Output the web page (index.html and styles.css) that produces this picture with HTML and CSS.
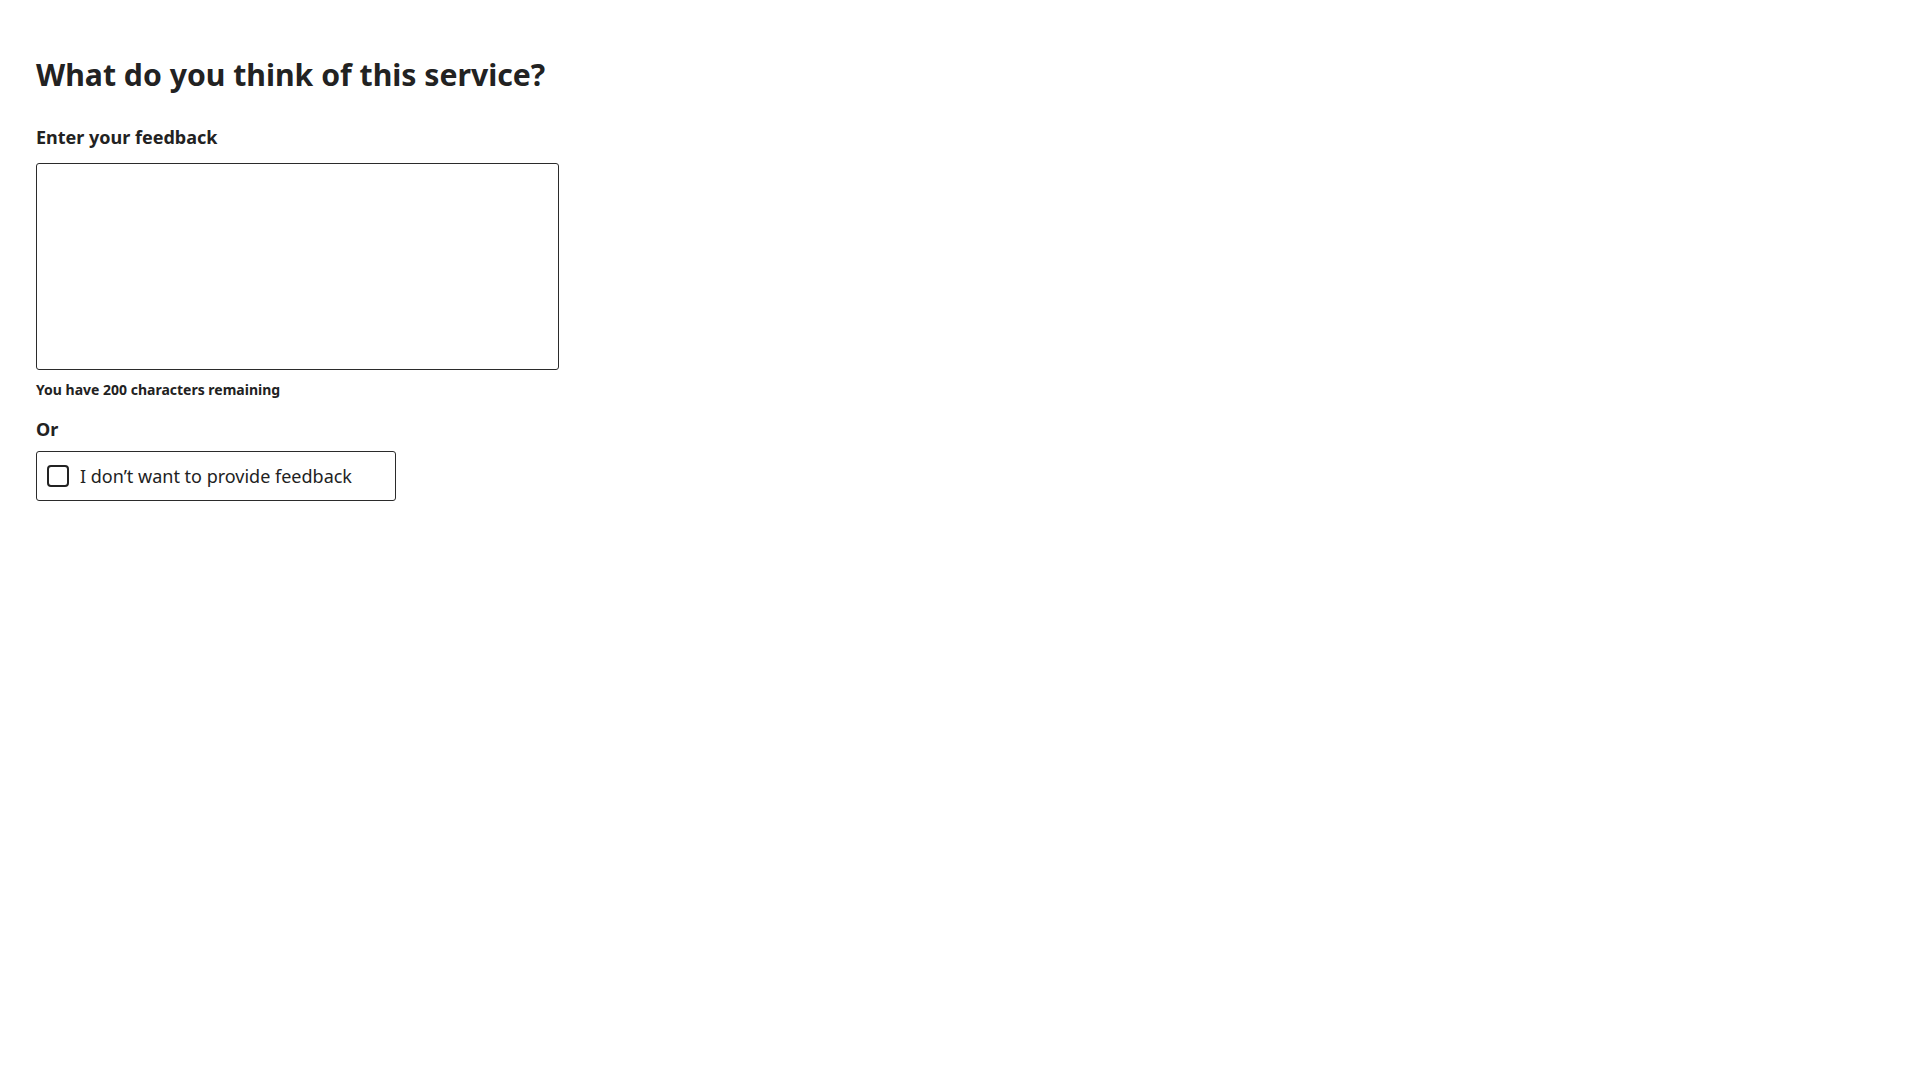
FILE: index.html
```html
<!DOCTYPE html>
<html lang="en">
<head>
<meta charset="utf-8">
<title>Feedback</title>
<link rel="stylesheet" href="styles.css">
</head>
<body>
<main class="page">
  <h1 class="title">What do you think of this service?</h1>
  <form class="form">
    <label class="label" for="feedback">Enter your feedback</label>
    <textarea class="textarea" id="feedback" name="feedback"></textarea>
    <p class="hint">You have 200 characters remaining</p>
    <p class="or">Or</p>
    <label class="opt-out">
      <input class="opt-out-input" type="checkbox" name="no-feedback">
      <span class="box" aria-hidden="true"></span>
      <span class="opt-out-text">I don’t want to provide feedback</span>
    </label>
  </form>
</main>
</body>
</html>
```

FILE: styles.css
```css
html, body {
  margin: 0;
  padding: 0;
  background: #ffffff;
}

body {
  font-family: "Noto Sans", "Open Sans", sans-serif;
  color: #222222;
}

.page {
  padding: 57px 36px 0 36px;
}

.title {
  margin: 0;
  font-size: 30.2px;
  line-height: 36px;
  font-weight: 700;
}

.form {
  display: flex;
  flex-direction: column;
  align-items: flex-start;
  margin-top: 32px;
}

.label {
  font-size: 18px;
  line-height: 24px;
  font-weight: 700;
}

.textarea {
  box-sizing: border-box;
  margin-top: 14px;
  width: 523px;
  height: 207px;
  border: 1px solid #2b2b2b;
  border-radius: 3px;
  resize: none;
  font-family: inherit;
  font-size: 16px;
  padding: 8px;
}

.hint {
  margin: 10px 0 0 0;
  font-size: 14px;
  line-height: 20px;
  font-weight: 700;
}

.or {
  margin: 17px 0 0 0;
  font-size: 18px;
  line-height: 24px;
  font-weight: 700;
}

.opt-out {
  box-sizing: border-box;
  margin-top: 10px;
  display: flex;
  align-items: center;
  gap: 11px;
  height: 50px;
  padding: 0 43px 0 10px;
  border: 1px solid #2b2b2b;
  border-radius: 3px;
  cursor: pointer;
}

.opt-out-input {
  position: absolute;
  opacity: 0;
  width: 1px;
  height: 1px;
  margin: 0;
}

.box {
  box-sizing: border-box;
  width: 22px;
  height: 22px;
  border: 2px solid #222222;
  border-radius: 4px;
  flex: none;
}

.opt-out-text {
  font-size: 18px;
  line-height: 24px;
  font-weight: 400;
}
```
